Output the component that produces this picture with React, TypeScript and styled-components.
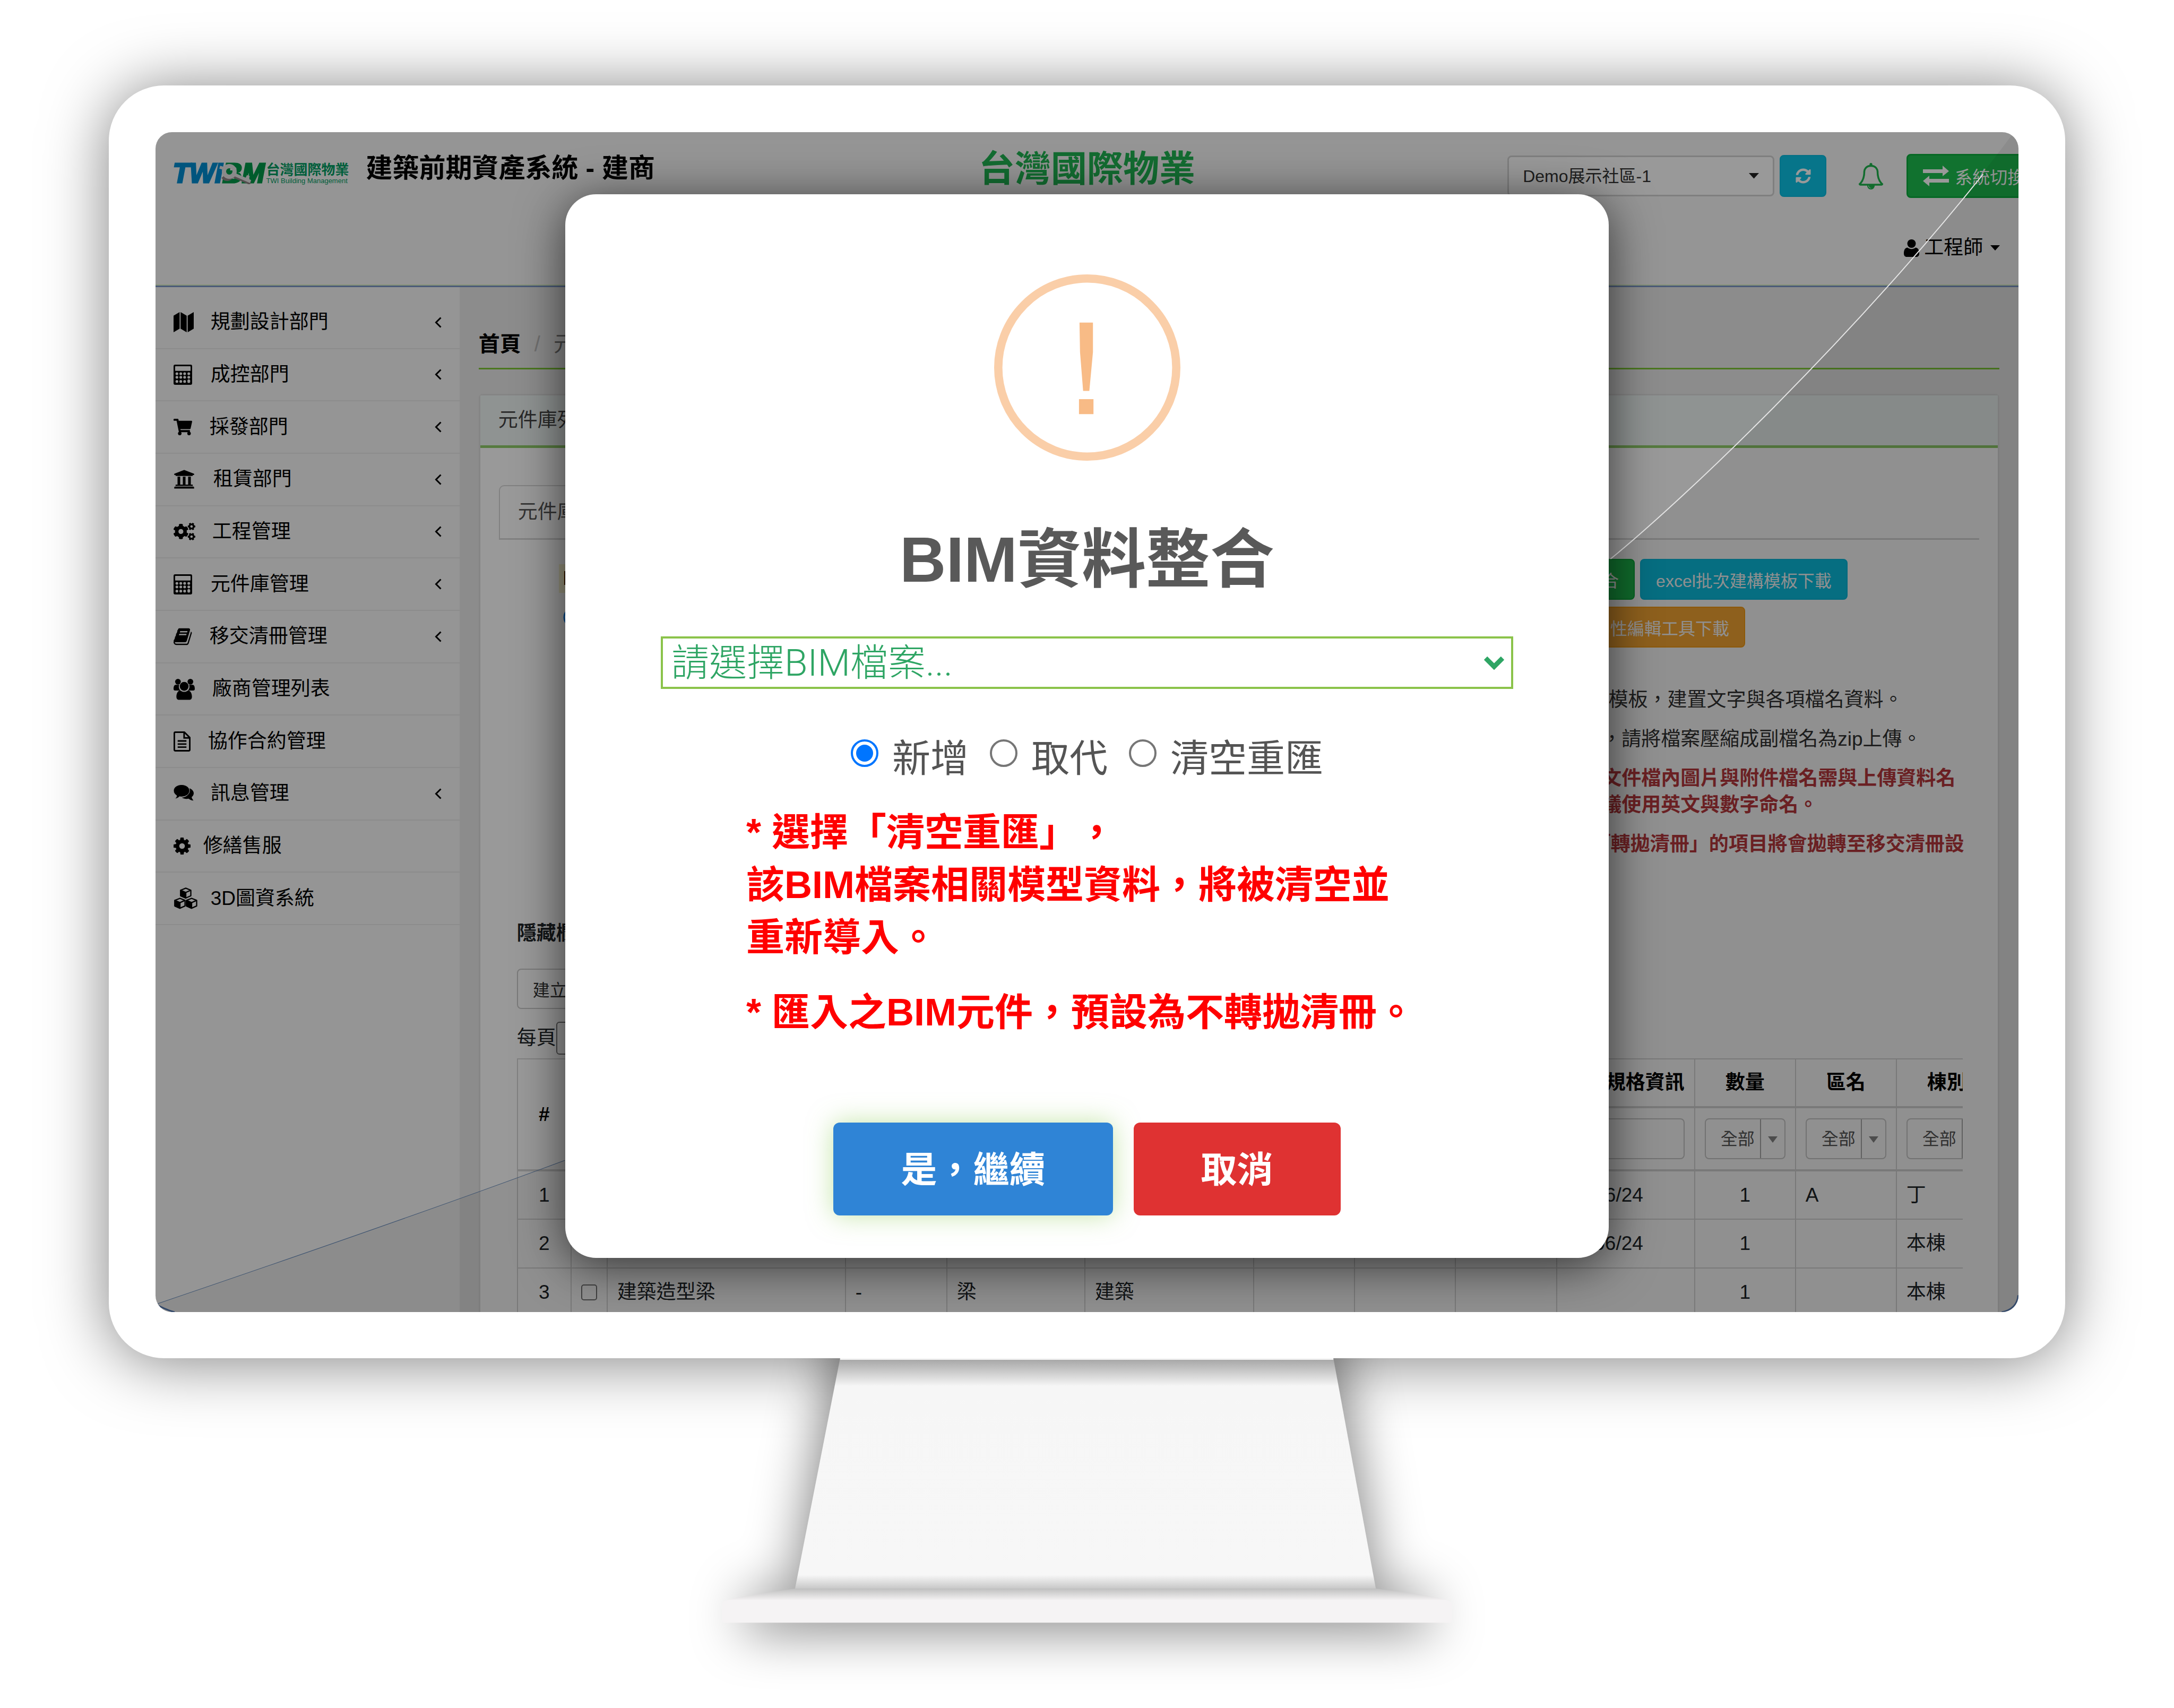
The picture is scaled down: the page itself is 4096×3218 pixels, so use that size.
import React from "react";
import styled, { createGlobalStyle } from "styled-components";
import { FaShoppingCart, FaUniversity, FaCogs, FaSyncAlt } from "react-icons/fa";

const sans = `"Liberation Sans", "Noto Sans CJK TC", sans-serif`;

const GlobalStyle = createGlobalStyle`
  *, *::before, *::after { box-sizing: border-box; }
  body { margin: 0; background: #fff; overflow-x: hidden; text-spacing-trim: space-all; }
  body, button, input, select { font-family: ${sans}; }
  ul, ol, p, h1, h2 { margin: 0; padding: 0; }
  ul, ol { list-style: none; }
  a { color: inherit; text-decoration: none; }
`;

/* ---------- monitor ---------- */

const Page = styled.div`
  padding-top: 161px;
  overflow: hidden;
`;

const Monitor = styled.div`
  margin: 0 5%;
  padding: 88px 88px 87px;
  border-radius: 104px;
  background: #fff;
  box-shadow: 0 6px 120px rgba(0, 0, 0, 0.5);
`;

const Screen = styled.div`
  position: relative;
  aspect-ratio: 3510 / 2223;
  overflow: hidden;
  border-radius: 31px;
  background: #f8f8f8;
  color: #212529;
  font-size: 37px;
  line-height: 50px;
`;

const StandDrawing = styled.svg`
  display: block;
  position: relative;
  width: 100%;
`;

const Dim = styled.div`
  position: absolute;
  inset: 0;
  background: rgba(0, 0, 0, 0.4);
`;

const Gloss = styled.svg`
  position: absolute;
  inset: 0;
  width: 100%;
  height: 100%;
`;

/* ---------- header ---------- */

const Header = styled.header`
  display: grid;
  grid-template-columns: 1fr auto 1fr;
  align-items: start;
  height: 292px;
  border-bottom: 3px solid #7d98c8;
  box-shadow: inset 0 -2px #dff5c8;
`;

const Brand = styled.div`
  display: flex;
  gap: 32px;
  padding: 32px 0 0 33px;
`;

const Logo = styled.a`
  position: relative;
  display: flex;
  align-items: center;
  gap: 3px;
  margin-top: 25px;
  height: 42px;
`;

const LogoMark = styled.span`
  font: italic bold 51px/42px "Liberation Sans", sans-serif;
  color: #008ed2;
  -webkit-text-stroke: 3px currentColor;
  b { color: #00994a; }
`;

const LogoName = styled.span`
  display: flex;
  flex-direction: column;
  color: #009d63;
  font-size: 26px;
  font-weight: 700;
  line-height: 28px;
  small {
    font-size: 13px;
    font-weight: 400;
    line-height: 14px;
  }
`;

const LogoKey = styled.svg`
  position: absolute;
  left: 86px;
  top: 3px;
  width: 68px;
  height: 38px;
`;

const SystemName = styled.h2`
  font-size: 50px;
  line-height: 72px;
  color: #000;
  white-space: nowrap;
`;

const Company = styled.h1`
  padding-top: 33px;
  font-size: 68px;
  font-weight: 700;
  line-height: 72px;
  color: #21b552;
`;

const Tools = styled.div`
  justify-self: end;
  width: 963px;
  padding-top: 41px;
`;

const ToolRow = styled.div`
  display: flex;
  align-items: center;
  height: 83px;
`;

const SelectBox = styled.span`
  display: grid;
  flex: none;
  align-items: center;
  > select, > svg { grid-area: 1 / 1; }
  > svg { justify-self: end; pointer-events: none; }
`;

const CommunitySelect = styled.select`
  appearance: none;
  width: 503px;
  height: 77px;
  padding: 0 26px;
  border: 3px solid #d4d4d4;
  border-radius: 8px;
  background: #fff;
  color: #333;
  font-size: 32px;
`;

const CommunityBox = styled(SelectBox)`
  > svg { margin-right: 29px; }
`;

const RefreshButton = styled.button`
  display: grid;
  flex: none;
  place-items: center;
  width: 88px;
  height: 79px;
  margin-left: 10px;
  padding: 0;
  border: 2px solid #09bbde;
  border-radius: 8px;
  background: #0dc3e6;
  color: #fff;
  font-size: 29px;
`;

const BellButton = styled.button`
  display: grid;
  flex: none;
  place-items: center;
  width: 47px;
  padding: 0;
  margin: 0 45px 0 59px;
  border: 0;
  background: none;
  color: #1fb54e;
`;

const SwitchButton = styled.button`
  display: flex;
  flex: none;
  align-items: center;
  gap: 11px;
  height: 83px;
  padding: 0 28px;
  border: 3px solid #0bad3c;
  border-radius: 8px;
  background: #1dbf4f;
  color: #fff;
  font-size: 33px;
`;

const UserMenu = styled.a`
  display: flex;
  align-items: center;
  justify-content: flex-end;
  gap: 9px;
  margin-top: 69px;
  padding-right: 35px;
  color: #000;
  > svg:last-child { margin-left: 5px; }
`;

/* ---------- sidebar ---------- */

const Body = styled.div`
  display: flex;
  align-items: stretch;
  min-height: 1931px;
`;

const Sidebar = styled.nav`
  flex: none;
  width: 573px;
  padding-top: 18px;
`;

const Menu = styled.ul`
  display: grid;
  grid-template-rows: repeat(12, 1fr);
  height: 1184px;
`;

const MenuItem = styled.li`
  display: grid;
  border-bottom: 2px solid #e9e9e9;
`;

const MenuLink = styled.a`
  display: flex;
  align-items: center;
  padding: 0 34px;
  color: #000;
`;

const IconSlot = styled.span<{ $w: number }>`
  display: flex;
  flex: none;
  width: ${(p) => p.$w}px;
`;

const MenuText = styled.span`
  flex: 1;
`;

/* ---------- content ---------- */

const Content = styled.main`
  flex: 1;
  min-width: 0;
  padding: 79px 36px 0;
  background: #e9e9e9;
`;

const Breadcrumb = styled.ol`
  display: flex;
  gap: 25px;
  padding-bottom: 17px;
  border-bottom: 3px solid #7ec636;
  font-size: 40px;
  line-height: 56px;
  color: #777;
  li:first-child { font-weight: 700; color: #000; }
  li[aria-hidden] { color: #bbb; }
`;

const Card = styled.section`
  margin-top: 46px;
  border: 3px solid #dedede;
  border-bottom: 0;
  border-radius: 8px 8px 0 0;
  background: #fff;
`;

const CardHeader = styled.div`
  padding: 22px 34px;
  border-bottom: 5px solid #8fcb69;
  background: #eff5f4;
  color: #444;
`;

const CardBody = styled.div`
  padding: 70px 35px 0;
`;

const Tabs = styled.div`
  display: flex;
  border-bottom: 3px solid #d8d8d8;
`;

const Tab = styled.a`
  padding: 24px 34px;
  border: 2px solid #d8d8d8;
  border-bottom: 0;
  border-radius: 10px 10px 0 0;
  color: #555;
`;

const Intro = styled.div`
  display: flex;
  padding: 36px 0 0 113px;
`;

const Hints = styled.div`
  display: flex;
  flex: 1;
  flex-direction: column;
  align-items: flex-start;
  gap: 26px;
  padding-top: 10px;
  mark {
    padding: 2px 8px;
    background: #fbf5d0;
    color: #000;
    font-weight: 700;
  }
  a { padding-left: 8px; color: #1183f0; }
`;

const Actions = styled.div`
  width: 830px;
  flex: none;
`;

const ButtonRow = styled.div`
  display: flex;
  gap: 10px;
  margin-bottom: 13px;
`;

const ActionButton = styled.button<{ $bg: string; $line: string }>`
  height: 77px;
  padding: 0 28px;
  border: 2px solid ${(p) => p.$line};
  border-radius: 8px;
  background: ${(p) => p.$bg};
  color: #fff;
  font-size: 32px;
  white-space: nowrap;
`;

const Notes = styled.ul`
  padding: 61px 0 0 45px;
  white-space: nowrap;
`;

const Note = styled.li<{ $warn?: boolean }>`
  margin-bottom: 24px;
  color: ${(p) => (p.$warn ? "#bd3b40" : "#333")};
  font-weight: ${(p) => (p.$warn ? 700 : 400)};
`;

const ListArea = styled.div`
  padding: 94px 31px 0 34px;
`;

const HideLabel = styled.div`
  font-weight: 700;
`;

const PlainButton = styled.button`
  display: block;
  height: 76px;
  margin: 41px 0 24px;
  padding: 0 28px;
  border: 2px solid #ccc;
  border-radius: 8px;
  background: #fff;
  color: #333;
  font-size: 32px;
`;

const PageSize = styled.label`
  display: flex;
  align-items: center;
  height: 62px;
  margin-bottom: 7px;
  select {
    height: 62px;
    width: 120px;
    padding-left: 30px;
    border: 2px solid #767676;
    border-radius: 6px;
    background: #fff;
    font-size: 32px;
  }
`;

const TableClip = styled.div`
  overflow: hidden;
`;

const Table = styled.table`
  width: 2788px;
  table-layout: fixed;
  border-collapse: collapse;
  th, td {
    height: 92px;
    padding: 0 18px;
    border: 2px solid #d8d8d8;
    text-align: left;
    white-space: nowrap;
  }
  th { height: 91px; text-align: center; color: #000; border-bottom-width: 4px; }
  tr.filters th { height: 119px; }
  td.center { text-align: center; }
`;

const FilterInput = styled.input`
  display: block;
  width: 100%;
  height: 77px;
  border: 2px solid #ccc;
  border-radius: 8px;
  background: #fff;
`;

const FilterSelectBox = styled(SelectBox)`
  > svg { margin-right: 2px; }
`;

const FilterSelect = styled.select`
  appearance: none;
  width: 100%;
  height: 77px;
  padding: 0 28px;
  border: 2px solid #ccc;
  border-radius: 8px;
  background: #fff;
  color: #555;
  font-size: 32px;
`;

const RowCheck = styled.input`
  appearance: none;
  display: block;
  width: 30px;
  height: 30px;
  margin: 0;
  border: 2px solid #767676;
  border-radius: 5px;
  background: #fff;
`;

/* ---------- dialog ---------- */

const DialogLayer = styled.div`
  position: absolute;
  inset: 0;
  display: flex;
  align-items: flex-start;
  justify-content: center;
  padding-top: 117px;
`;

const Dialog = styled.section`
  display: flex;
  flex-direction: column;
  align-items: center;
  width: 56%;
  padding: 151px 0 80px;
  border-radius: 58px;
  background: #fff;
  box-shadow: 0 14px 90px rgba(0, 0, 0, 0.65);
  color: #545454;
  font-size: 72px;
  line-height: 99px;
`;

const WarningIcon = styled.svg`
  width: 351px;
  height: 351px;
`;

const DialogTitle = styled.h2`
  margin-top: 115px;
  font-size: 121px;
  line-height: 142px;
  color: #595959;
`;

const FileBox = styled(SelectBox)`
  width: 1606px;
  margin-top: 74px;
  > svg { margin-right: 17px; }
`;

const FileSelect = styled.select`
  appearance: none;
  width: 100%;
  height: 99px;
  padding: 0 16px;
  border: 4px solid #8bc34a;
  border-radius: 0;
  background: #fff;
  color: #2ea564;
  font-family: Roboto, "Noto Sans CJK TC", sans-serif;
  font-size: 71px;
  font-weight: 300;
`;

const Choices = styled.div`
  display: flex;
  gap: 40px;
  margin-top: 82px;
`;

const Choice = styled.label`
  display: flex;
  gap: 26px;
`;

const Radio = styled.input`
  appearance: none;
  display: grid;
  place-items: center;
  width: 52px;
  height: 52px;
  margin: 13px 0 0;
  border: 4px solid #767676;
  border-radius: 50%;
  background: #fff;
  &:checked { border-color: #0075ff; }
  &:checked::before {
    content: "";
    width: 32px;
    height: 32px;
    border-radius: 50%;
    background: #0075ff;
  }
`;

const Warnings = styled.div`
  align-self: flex-start;
  display: grid;
  gap: 42px;
  margin: 40px 0 0 341px;
  color: #f00;
  font-weight: 700;
`;

const DialogButtons = styled.div`
  display: flex;
  gap: 39px;
  margin-top: 158px;
`;

const DialogButton = styled.button<{ $bg: string; $glow?: boolean }>`
  height: 175px;
  padding: 0 127px 8px;
  border: 0;
  border-radius: 12px;
  background: ${(p) => p.$bg};
  box-shadow: ${(p) => (p.$glow ? "0 0 48px rgba(139, 205, 84, 0.5)" : "none")};
  color: #fff;
  font-size: 68px;
  font-weight: 700;
`;

/* ---------- icons ---------- */

const Caret = ({ size = 20, color = "#000" }: { size?: number; color?: string }) => (
  <svg width={size} height={size / 2 + 1} viewBox="0 0 20 11" fill={color}>
    <path d="M0 0H20L10 11Z" />
  </svg>
);

const MapIcon = () => (
  <svg width="38" height="38" viewBox="0 0 40 40">
    <path d="M0 7 12 0V33L0 40ZM14 0 26 7V40L14 33ZM28 7 40 0V33L28 40Z" />
  </svg>
);

const CalculatorIcon = () => (
  <svg width="35" height="38" viewBox="0 0 36 39">
    <rect width="36" height="39" rx="3" />
    <rect x="3" y="3" width="30" height="9" rx="1" fill="#f8f8f8" />
    {[17.5, 24.5].map((y) =>
      [6.5, 14, 21.5, 29.5].map((x) => <circle key={x + "-" + y} cx={x} cy={y} r="2.7" fill="#f8f8f8" />)
    )}
    {[6.5, 14, 21.5].map((x) => (
      <circle key={x} cx={x} cy="32.5" r="2.7" fill="#f8f8f8" />
    ))}
    <rect x="26.8" y="28.5" width="5.4" height="7" rx="2.7" fill="#f8f8f8" />
  </svg>
);

const BookIcon = () => (
  <svg width="37" height="37" viewBox="64 0 1792 1792">
    <path d="M1703 478q40 57 18 129l-275 906q-19 64-76.5 107.5t-122.5 43.5h-923q-77 0-148.5-53.5t-99.5-131.5q-24-67-2-127 0-4 3-27t4-37q1-8-3-21.5t-3-19.5q2-11 8-21t16.5-23.5 16.5-23.5q23-38 45-91.5t30-91.5q3-10 .5-30t-.5-28q3-11 17-28t17-23q21-36 42-92t25-90q1-9-2.5-32t.5-28q4-13 22-30.5t22-22.5q19-26 42.5-84.5t27.5-96.5q1-8-3-25.5t-2-26.5q2-8 9-18t18-23 17-21q8-12 16.5-30.5t15-35 16-36 19.5-32 26.5-23.5 36-11.5 47.5 5.5l-1 3q38-9 51-9h761q74 0 114 56t18 130l-274 906q-36 119-71.5 153.5t-128.5 34.5h-869q-27 0-38 15-11 16-1 43 24 70 144 70h923q29 0 56-15.5t35-41.5l300-987q7-22 5-57 38 15 59 43zm-1064 2q-4 13 2 22.5t20 9.5h608q13 0 25.5-9.5t16.5-22.5l21-64q4-13-2-22.5t-20-9.5h-608q-13 0-25.5 9.5t-16.5 22.5zm-83 256q-4 13 2 22.5t20 9.5h608q13 0 25.5-9.5t16.5-22.5l21-64q4-13-2-22.5t-20-9.5h-608q-13 0-25.5 9.5t-16.5 22.5z" />
  </svg>
);

const UsersIcon = () => (
  <svg width="40" height="42" viewBox="0 0 41 42">
    <circle cx="8.500" cy="7" r="5.500" />
    <circle cx="32.500" cy="7" r="5.500" />
    <path d="M4 13h7c-2 5 0 8 2 11H3c-2 0-3-1-3-3 0-4 1-8 4-8ZM37 13h-7c2 5 0 8-2 11h10c2 0 3-1 3-3 0-4-1-8-4-8Z" />
    <circle cx="20.500" cy="16" r="8.500" />
    <path d="M13 24c5 3.500 10 3.500 15 0 5 0 7.500 6 7.500 12 0 4-2 6-5.500 6H11c-3.500 0-5.500-2-5.500-6 0-6 2.500-12 7.500-12Z" />
  </svg>
);

const FileIcon = () => (
  <svg width="32" height="38" viewBox="0 0 33 39" fill="none" stroke="#000" strokeWidth="3">
    <path d="M1.500 3.500q0-2 2-2H21L31.500 12V35.500q0 2-2 2H3.500q-2 0-2-2ZM20.500 2V12.500H31M8 18.500H25M8 24.500H25M8 30.500H25" />
  </svg>
);

const CommentsIcon = () => (
  <svg width="38" height="34" viewBox="0 0 39 34">
    <path d="M31 7c5 2 8 5.500 8 9.500 0 3-1.500 5.500-4 7.500.5 3 2 4.500 3.500 6.500-4 0-7-1.500-9.500-3.500-5 1-9.500 0-13-2 10-1 16.500-8 15-18Z" />
    <path d="M15.500 0C24 0 31 5 31 11.700S24 23.400 15.500 23.400c-1.500 0-3 0-4-.4C9 25.500 6 27 2.500 27.500 4.500 25.500 6 23.500 6 21 2.500 19 0 15.500 0 11.700 0 5 7 0 15.500 0Z" stroke="#f8f8f8" strokeWidth="1" />
  </svg>
);

const CogIcon = () => (
  <svg width="32" height="32" viewBox="128 128 1536 1536">
    <path d="M1152 896q0-106-75-181t-181-75-181 75-75 181 75 181 181 75 181-75 75-181zm512-109v222q0 12-8 23t-20 13l-185 28q-19 54-39 91 35 50 107 138 10 12 10 25t-9 23q-27 37-99 108t-94 71q-12 0-26-9l-138-108q-44 23-91 38-16 136-29 186-7 28-36 28h-222q-14 0-24.5-8.5t-11.5-21.5l-28-184q-49-16-90-37l-141 107q-10 9-25 9-14 0-25-11-126-114-165-168-7-10-7-23 0-12 8-23 15-21 51-66.5t54-70.5q-27-50-41-99l-183-27q-13-2-21-12.5t-8-23.5v-222q0-12 8-23t19-13l186-28q14-46 39-92-40-57-107-138-10-12-10-24 0-10 9-23 26-36 98.5-107.5t94.5-71.5q13 0 26 10l138 107q44-23 91-38 16-136 29-186 7-28 36-28h222q14 0 24.5 8.5t11.5 21.5l28 184q49 16 90 37l142-107q9-9 24-9 13 0 25 10 129 119 165 170 7 8 7 22 0 12-8 23-15 21-51 66.5t-54 70.5q26 50 41 98l183 28q13 2 21 12.5t8 23.5z" />
  </svg>
);

const Cube = ({ x, y }: { x: number; y: number }) => (
  <g transform={`translate(${x} ${y})`} stroke="#000" strokeWidth="2.400" strokeLinejoin="round">
    <path d="M0-9.500 10-5.500V5.500L0 10-10 5.500V-5.500Z" fill="#f8f8f8" />
    <path d="M-10-5.500 0-1V10L-10 5.500Z" />
    <path d="M0-1 10-5.500" />
  </g>
);

const CubesIcon = () => (
  <svg width="46" height="42" viewBox="0 0 47 44">
    <Cube x={23.5} y={11} />
    <Cube x={12} y={31} />
    <Cube x={35} y={31} />
  </svg>
);

const ChevronLeft = () => (
  <svg width="13" height="21" viewBox="0 0 13 21" fill="none" stroke="#000" strokeWidth="3">
    <path d="M11.500 1.500 2.500 10.500 11.500 19.500" />
  </svg>
);

const BellIcon = () => (
  <svg width="50" height="50" viewBox="0 0 1792 1792" fill="currentColor">
    <path d="M912 1696q0-16-16-16-59 0-101.5-42.5t-42.5-101.5q0-16-16-16t-16 16q0 73 51.5 124.5t124.5 51.5q16 0 16-16zm-666-288h1300q-266-300-266-832 0-51-24-105t-69-103-121.5-80.5-169.5-31.5-169.5 31.5-121.5 80.5-69 103-24 105q0 532-266 832zm1482 0q0 52-38 90t-90 38h-448q0 106-75 181t-181 75-181-75-75-181h-448q-52 0-90-38t-38-90q50-42 91-88t85-119.5 74.5-158.5 50-206 19.5-260q0-152 117-282.500t307-158.5q-8-19-8-39 0-40 28-68t68-28 68 28 28 68q0 20-8 39 190 28 307 158.5t117 282.5q0 139 19.5 260t50 206 74.5 158.5 85 119.5 91 88z" />
  </svg>
);

const ExchangeIcon = () => (
  <svg width="49" height="39" viewBox="0 0 49 39" fill="currentColor">
    <path d="M0 7H37V0L49 10.500 37 20V14H0ZM49 32H12V39L0 29 12 19V25H49Z" />
  </svg>
);

const UserIcon = () => (
  <svg width="29" height="33" viewBox="0 0 29 33">
    <circle cx="14.500" cy="8" r="8" />
    <path d="M7 15.500c5 3.500 10 3.500 15 0 5 0 7 5 7 11 0 4-2 6.500-5.500 6.500h-18C2 33 0 30.500 0 26.500c0-6 2-11 7-11Z" />
  </svg>
);

type MenuEntry = { text: string; slot: number; icon: React.ReactNode; open?: boolean };

const menu: MenuEntry[] = [
  { text: "規劃設計部門", slot: 70, icon: <MapIcon />, open: true },
  { text: "成控部門", slot: 70, icon: <CalculatorIcon />, open: true },
  { text: "採發部門", slot: 68, icon: <FaShoppingCart size={35} />, open: true },
  { text: "租賃部門", slot: 75, icon: <FaUniversity size={40} />, open: true },
  { text: "工程管理", slot: 73, icon: <FaCogs size={41} />, open: true },
  { text: "元件庫管理", slot: 70, icon: <CalculatorIcon />, open: true },
  { text: "移交清冊管理", slot: 68, icon: <BookIcon />, open: true },
  { text: "廠商管理列表", slot: 73, icon: <UsersIcon /> },
  { text: "協作合約管理", slot: 65, icon: <FileIcon /> },
  { text: "訊息管理", slot: 70, icon: <CommentsIcon />, open: true },
  { text: "修繕售服", slot: 56, icon: <CogIcon /> },
  { text: "3D圖資系統", slot: 70, icon: <CubesIcon /> },
];

const columns = [101, 68, 449, 191, 260, 318, 190, 190, 191, 260, 190, 190, 190];

const rows = [
  { n: 1, name: "", mark: "", kind: "", field: "", spec: "22/06/24", qty: 1, zone: "A", block: "丁" },
  { n: 2, name: "", mark: "", kind: "", field: "", spec: "22/06/24", qty: 1, zone: "", block: "本棟" },
  { n: 3, name: "建築造型梁", mark: "-", kind: "梁", field: "建築", spec: "", qty: 1, zone: "", block: "本棟" },
];

const AllFilter = ({ label }: { label: string }) => (
  <FilterSelectBox>
    <FilterSelect aria-label={label}>
      <option>全部</option>
    </FilterSelect>
    <svg width="46" height="73" viewBox="0 0 46 73">
      <path d="M1 0V73" stroke="#aaa" strokeWidth="2" />
      <path d="M15 32H33L24 44Z" fill="#888" />
    </svg>
  </FilterSelectBox>
);

const Stand = () => (
  <StandDrawing viewBox="0 2624 4200 675" aria-hidden="true">
    <defs>
      <linearGradient id="neck" gradientUnits="userSpaceOnUse" x1="0" y1="2627" x2="0" y2="3069">
        <stop offset="0" stopColor="#a8a8a8" />
        <stop offset="0.040" stopColor="#c2c2c2" />
        <stop offset="0.115" stopColor="#f6f6f6" />
        <stop offset="0.940" stopColor="#f7f7f7" />
        <stop offset="1" stopColor="#c8c8c8" />
      </linearGradient>
      <linearGradient id="foot" gradientUnits="userSpaceOnUse" x1="0" y1="3069" x2="0" y2="3092">
        <stop offset="0" stopColor="#bfbfbf" />
        <stop offset="1" stopColor="#f5f3f4" />
      </linearGradient>
      <filter id="soft" filterUnits="userSpaceOnUse" x="1000" y="2400" width="2200" height="1000">
        <feGaussianBlur stdDeviation="50" />
      </filter>
    </defs>
    <g filter="url(#soft)" fill="#000" fillOpacity="0.5">
      <path d="M1623 2560H2576L2658 3069H1536Z" />
      <path d="M1450 3080H2750L2770 3150H1430Z" />
    </g>
    <path d="M1623 2624H2576L2658 3069H1536Z" fill="url(#neck)" />
    <path d="M1623 2624H2576V2627H1623Z" fill="#f4f4f4" />
    <path d="M1536 3069H2658L2720 3077Q2770 3084 2798 3092H1402Q1430 3084 1480 3077Z" fill="url(#foot)" />
    <path d="M1395 3101Q1395 3091 1412 3091H2788Q2805 3091 2805 3101V3130Q2805 3135 2800 3135H1400Q1395 3135 1395 3130Z" fill="#f5f3f4" />
  </StandDrawing>
);

export default function App() {
  return (
    <Page lang="zh-Hant">
      <GlobalStyle />
      <Monitor>
        <Screen>
          <Header>
            <Brand>
              <Logo href="#" aria-label="TWIBM">
                <LogoMark>
                  TWI<b>BM</b>
                </LogoMark>
                <LogoName>
                  台灣國際物業
                  <small>TWI Building Management</small>
                </LogoName>
                <LogoKey viewBox="0 0 68 38" fill="none">
                  <path d="M8 24Q16 34 27 22L60 36" stroke="#8c8484" strokeWidth="7" />
                  <circle cx="20" cy="14" r="10" stroke="#e6e6e6" strokeWidth="8" />
                  <path d="M28 19 60 33M52 30 56 22M2 6 12 9" stroke="#e6e6e6" strokeWidth="6" />
                </LogoKey>
              </Logo>
              <SystemName>建築前期資產系統 - 建商</SystemName>
            </Brand>
            <Company>台灣國際物業</Company>
            <Tools>
              <ToolRow>
                <CommunityBox>
                  <CommunitySelect aria-label="社區">
                    <option>Demo展示社區-1</option>
                  </CommunitySelect>
                  <Caret size={19} color="#222" />
                </CommunityBox>
                <RefreshButton aria-label="重新整理">
                  <FaSyncAlt />
                </RefreshButton>
                <BellButton aria-label="通知">
                  <BellIcon />
                </BellButton>
                <SwitchButton>
                  <ExchangeIcon />
                  系統切換
                </SwitchButton>
              </ToolRow>
              <UserMenu href="#">
                <UserIcon />
                工程師
                <Caret size={18} />
              </UserMenu>
            </Tools>
          </Header>

          <Body>
            <Sidebar>
              <Menu>
                {menu.map((m) => (
                  <MenuItem key={m.text}>
                    <MenuLink href="#">
                      <IconSlot $w={m.slot}>{m.icon}</IconSlot>
                      <MenuText>{m.text}</MenuText>
                      {m.open && <ChevronLeft />}
                    </MenuLink>
                  </MenuItem>
                ))}
              </Menu>
            </Sidebar>

            <Content>
              <Breadcrumb>
                <li>
                  <a href="#">首頁</a>
                </li>
                <li aria-hidden="true">/</li>
                <li>元件庫</li>
              </Breadcrumb>
              <Card>
                <CardHeader>元件庫列表</CardHeader>
                <CardBody>
                  <Tabs>
                    <Tab href="#">元件庫</Tab>
                  </Tabs>
                  <Intro>
                    <Hints>
                      <mark>BIM</mark>
                      <a href="#" aria-label="說明">
                        <svg width="40" height="40" viewBox="0 0 40 40" fill="none" stroke="currentColor" strokeWidth="3">
                          <circle cx="20" cy="20" r="18" />
                        </svg>
                      </a>
                    </Hints>
                    <Actions>
                      <ButtonRow>
                        <ActionButton $bg="#1dbf4f" $line="#0bad3c">BIM整合</ActionButton>
                        <ActionButton $bg="#0dc3e6" $line="#09bbde">excel批次建構模板下載</ActionButton>
                      </ButtonRow>
                      <ButtonRow>
                        <ActionButton $bg="#fcab35" $line="#fa9f14">Revit屬性編輯工具下載</ActionButton>
                      </ButtonRow>
                      <Notes>
                        <Note>excel模板，建置文字與各項檔名資料。</Note>
                        <Note>PDF，請將檔案壓縮成副檔名為zip上傳。</Note>
                        <Note $warn>
                          上傳文件檔內圖片與附件檔名需與上傳資料名
                          <br />
                          ，建議使用英文與數字命名。
                        </Note>
                        <Note $warn>DB「轉拋清冊」的項目將會拋轉至移交清冊設</Note>
                      </Notes>
                    </Actions>
                  </Intro>

                  <ListArea>
                    <HideLabel>隱藏欄位</HideLabel>
                    <PlainButton>建立</PlainButton>
                    <PageSize>
                      每頁
                      <select>
                        <option>10</option>
                      </select>
                    </PageSize>
                    <TableClip>
                      <Table>
                        <colgroup>
                          {columns.map((w, i) => (
                            <col key={i} style={{ width: w }} />
                          ))}
                        </colgroup>
                        <thead>
                          <tr>
                            <th rowSpan={2}>#</th>
                            <th rowSpan={2} />
                            <th />
                            <th />
                            <th />
                            <th />
                            <th />
                            <th />
                            <th />
                            <th>產品規格資訊</th>
                            <th>數量</th>
                            <th>區名</th>
                            <th>棟別</th>
                          </tr>
                          <tr className="filters">
                            <th />
                            <th />
                            <th />
                            <th />
                            <th />
                            <th />
                            <th />
                            <th>
                              <FilterInput aria-label="規格資訊" />
                            </th>
                            <th>
                              <AllFilter label="數量" />
                            </th>
                            <th>
                              <AllFilter label="區名" />
                            </th>
                            <th>
                              <AllFilter label="棟別" />
                            </th>
                          </tr>
                        </thead>
                        <tbody>
                          {rows.map((r) => (
                            <tr key={r.n}>
                              <td className="center">{r.n}</td>
                              <td>
                                <RowCheck type="checkbox" aria-label={`選取 ${r.n}`} />
                              </td>
                              <td>{r.name}</td>
                              <td>{r.mark}</td>
                              <td>{r.kind}</td>
                              <td>{r.field}</td>
                              <td />
                              <td />
                              <td />
                              <td>{r.spec}</td>
                              <td className="center">{r.qty}</td>
                              <td>{r.zone}</td>
                              <td>{r.block}</td>
                            </tr>
                          ))}
                        </tbody>
                      </Table>
                    </TableClip>
                  </ListArea>
                </CardBody>
              </Card>
            </Content>
          </Body>

          <Dim />
          <Gloss viewBox="0 0 3510 2223" preserveAspectRatio="none" fill="none" aria-hidden="true">
            <path
              d="M1 2208C260 2120 520 2030 771 1937 1600 1630 2200 1250 2741 804 2900 675 3280 300 3501 0H3510V2223H40Z"
              fill="#000"
              fillOpacity="0.060"
            />
            <path d="M1 2208C260 2120 520 2030 771 1937" stroke="#3d5370" />
            <path d="M2741 804C2880 691 3190 395 3443 79" stroke="#e4e4e4" strokeWidth="2" />
            <path d="M1 2208Q16 2217 36 2223M3509 2191Q3507 2217 3478 2223" stroke="#33496a" strokeWidth="3" />
          </Gloss>

          <DialogLayer>
            <Dialog role="dialog" aria-labelledby="dialog-title">
              <WarningIcon viewBox="0 0 360 360" aria-hidden="true">
                <circle cx="180" cy="180" r="172" fill="none" stroke="#facea8" strokeWidth="16" />
                <path d="M165 93H191V150L184 225H172L166 150ZM164 241H192V270H164Z" fill="#f8bb86" />
              </WarningIcon>
              <DialogTitle id="dialog-title">BIM資料整合</DialogTitle>
              <FileBox>
                <FileSelect aria-label="BIM檔案">
                  <option>請選擇BIM檔案...</option>
                </FileSelect>
                <svg width="38" height="26" viewBox="0 0 38 26" fill="none" stroke="#2ea564" strokeWidth="9">
                  <path d="M3 4 19 20 35 4" />
                </svg>
              </FileBox>
              <Choices role="radiogroup">
                <Choice>
                  <Radio type="radio" name="mode" defaultChecked />
                  新增
                </Choice>
                <Choice>
                  <Radio type="radio" name="mode" />
                  取代
                </Choice>
                <Choice>
                  <Radio type="radio" name="mode" />
                  清空重匯
                </Choice>
              </Choices>
              <Warnings>
                <p>
                  * 選擇「清空重匯」，
                  <br />
                  該BIM檔案相關模型資料，將被清空並
                  <br />
                  重新導入。
                </p>
                <p>* 匯入之BIM元件，預設為不轉拋清冊。</p>
              </Warnings>
              <DialogButtons>
                <DialogButton $bg="#2f84d6" $glow>
                  是，繼續
                </DialogButton>
                <DialogButton $bg="#df3232">取消</DialogButton>
              </DialogButtons>
            </Dialog>
          </DialogLayer>
        </Screen>
      </Monitor>
      <Stand />
    </Page>
  );
}
